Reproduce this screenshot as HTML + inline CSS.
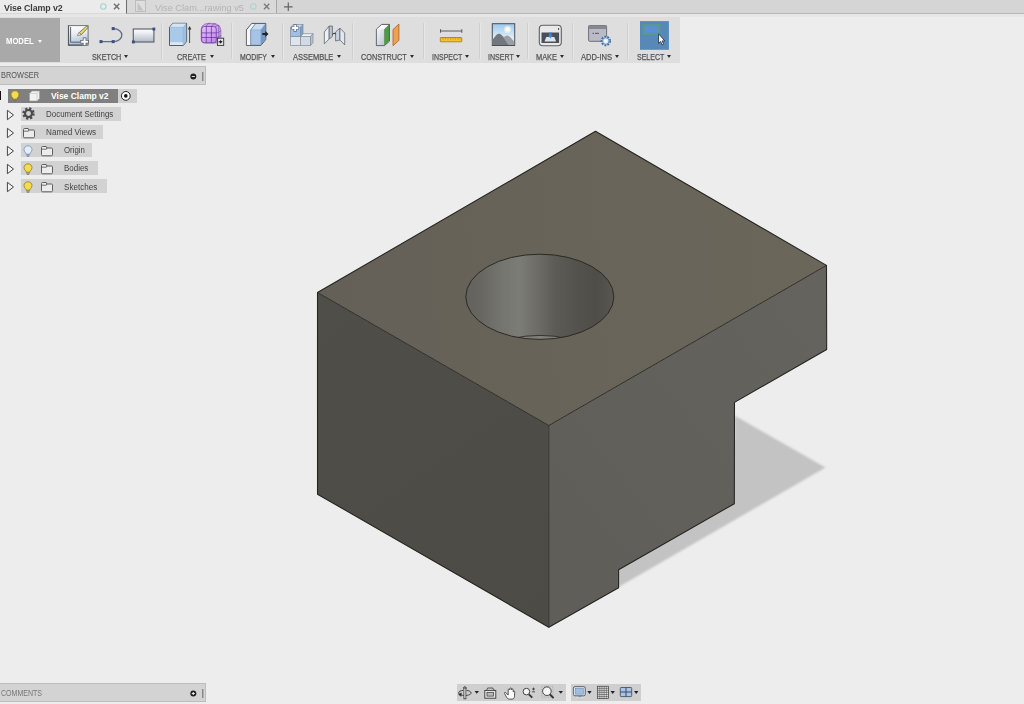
<!DOCTYPE html>
<html><head><meta charset="utf-8"><title>Vise Clamp v2</title>
<style>
*{box-sizing:border-box;margin:0;padding:0}
html,body{width:1024px;height:704px;overflow:hidden;background:#ededed;font-family:"Liberation Sans",sans-serif;}
#app{position:relative;width:1024px;height:704px;overflow:hidden;background:#ededed}
.abs{position:absolute}
#tabbar{left:0;top:0;width:1024px;height:14px;background:#d5d5d5;border-bottom:1px solid #b9b9b9}
#tab1{left:0;top:0;width:127px;height:14px;background:#ebebeb;border-right:1.200px solid #6e6e6e;border-bottom:1px solid #d8d8d8}
#tab2{left:128px;top:0;width:149px;height:13px;background:#d9d9d9;border-right:1px solid #a8a8a8}
.tabt{position:absolute;top:2px;font-size:9.5px;line-height:12px;white-space:nowrap;transform-origin:0 50%}
#toolbar{left:0;top:17px;width:680px;height:45.500px;background:#dedede}
#model{left:0;top:17.500px;width:60px;height:44.500px;background:#a9a9a9;color:#fff;font-weight:bold;font-size:9.300px;line-height:46px;padding-left:6px;white-space:nowrap}
.sep{position:absolute;top:23px;width:1px;height:36px;background:#cfcfcf;border-right:1px solid #e8e8e8;box-sizing:content-box}
.lbl{position:absolute;top:52px;height:10px;font-size:9px;line-height:10px;color:#555;-webkit-text-stroke:.250px #555;white-space:nowrap;transform-origin:0 50%}
.arw{position:absolute;top:54.800px;margin-left:.700px;width:0;height:0;border-left:2.5px solid transparent;border-right:2.5px solid transparent;border-top:3.5px solid #2e2e2e}
.lbl i{font-style:normal;font-size:6px;margin-left:2px;position:relative;top:-1px;color:#333;display:inline-block}
.bar{position:absolute;left:0;width:205.500px;height:19px;background:#d3d3d3;border:1px solid #bdbdbd;border-left:none;font-size:8px;line-height:16px;color:#555;padding-left:2px}
.row{position:absolute;height:14.400px;background:#d2d2d2}
.rt{position:absolute;font-size:8.500px;line-height:14.400px;color:#444;white-space:nowrap;transform-origin:0 50%}
</style></head><body>
<div id="app">
<svg class="abs" style="left:0;top:0" width="1024" height="704" viewBox="0 0 1024 704">
<defs>
<linearGradient id="gtop" gradientUnits="userSpaceOnUse" x1="330" y1="300" x2="820" y2="260"><stop offset="0" stop-color="#646058"/><stop offset="0.500" stop-color="#696459"/><stop offset="1" stop-color="#6b665a"/></linearGradient>
<linearGradient id="gleft" gradientUnits="userSpaceOnUse" x1="317" y1="300" x2="549" y2="620"><stop offset="0" stop-color="#504e49"/><stop offset="1" stop-color="#4c4b46"/></linearGradient>
<linearGradient id="gright" gradientUnits="userSpaceOnUse" x1="549" y1="520" x2="827" y2="300"><stop offset="0" stop-color="#5f5e59"/><stop offset="1" stop-color="#64635d"/></linearGradient>
<linearGradient id="ghole" gradientUnits="userSpaceOnUse" x1="466" y1="0" x2="614" y2="0">
<stop offset="0" stop-color="#63625c"/><stop offset="0.1" stop-color="#676660"/><stop offset="0.24" stop-color="#75756f"/><stop offset="0.36" stop-color="#7c7c76"/><stop offset="0.5" stop-color="#6b6a64"/><stop offset="0.6" stop-color="#5d5b55"/><stop offset="0.75" stop-color="#54524d"/><stop offset="0.88" stop-color="#4f4d48"/><stop offset="0.96" stop-color="#55534e"/><stop offset="1" stop-color="#5a5852"/></linearGradient>
<filter id="blur1" x="-5%" y="-5%" width="110%" height="110%"><feGaussianBlur stdDeviation="1.1"/></filter>
<clipPath id="holeclip"><ellipse cx="539.8" cy="296.8" rx="74" ry="42.6"/></clipPath>
</defs>
<!-- ground shadow -->
<polygon points="734.5,415.5 825.5,467.5 618.6,587 560,600 600,500 734.5,440" fill="#c3c3c3" filter="url(#blur1)"/>
<!-- faces -->
<polygon points="317.5,292.5 548.8,425.5 548.8,627.3 317.5,494.2" fill="url(#gleft)"/>
<polygon points="548.8,425.5 826.5,265.4 826.7,349.5 734.5,402.4 734.3,503.7 618.6,569.8 618.6,587.7 548.8,627.3" fill="url(#gright)"/>
<polygon points="317.5,292.5 595.5,131.3 826.5,265.4 548.8,425.5" fill="url(#gtop)"/>
<!-- hole -->
<ellipse cx="539.8" cy="296.8" rx="74" ry="42.6" fill="url(#ghole)"/>
<g clip-path="url(#holeclip)"><ellipse cx="539.800" cy="378" rx="74" ry="42.600" fill="#817f79" stroke="#2d2b26" stroke-width="0.900"/></g>
<ellipse cx="539.8" cy="296.8" rx="74" ry="42.6" fill="none" stroke="#2b2924" stroke-width="1"/>
<!-- edges -->
<g fill="none" stroke="#23221e" stroke-width="1.050" stroke-linejoin="round" stroke-linecap="round">
<polygon points="317.5,292.5 595.5,131.3 826.5,265.4 826.7,349.5 734.5,402.4 734.3,503.7 618.6,569.8 618.6,587.7 548.8,627.3 317.5,494.2"/>
<polyline points="317.5,292.5 548.8,425.5 826.5,265.4" stroke="#2a2823" stroke-width="0.95"/>
<line x1="548.8" y1="425.5" x2="548.8" y2="627.3" stroke="#33322d" stroke-width="1"/>
</g>
</svg>
<div id="tabbar" class="abs"></div>
<div id="tab1" class="abs"><span class="tabt" style="left:4px;color:#3c3c3c;font-weight:bold;transform:scaleX(.93);letter-spacing:-.1px">Vise Clamp v2</span>
<svg class="abs" style="left:96px;top:1px" width="28" height="12" viewBox="0 0 28 12"><circle cx="7.300" cy="5.500" r="2.700" fill="none" stroke="#a6d3cd" stroke-width="1.100"/><path d="M18 2.800l5.300 5.500M23.300 2.800l-5.300 5.500" stroke="#737373" stroke-width="1.500" fill="none"/></svg></div>
<div id="tab2" class="abs"><svg class="abs" style="left:6px;top:0" width="14" height="13" viewBox="0 0 14 13"><rect x="1.5" y="0.5" width="10" height="11" fill="#dedede" stroke="#bdbdbd"/><path d="M3.5 2.5v8h6z" fill="#c2c2c2"/></svg>
<span class="tabt" style="left:27px;color:#b4b4b4;transform:scaleX(.97)">Vise Clam...rawing v5</span>
<svg class="abs" style="left:118px;top:1px" width="28" height="12" viewBox="0 0 28 12"><circle cx="7.300" cy="5.500" r="2.700" fill="none" stroke="#a9d5cf" stroke-width="1.100"/><path d="M18 2.800l5.300 5.500M23.300 2.800l-5.300 5.500" stroke="#808080" stroke-width="1.500" fill="none"/></svg></div>
<svg class="abs" style="left:282px;top:1px" width="12" height="12" viewBox="0 0 12 12"><path d="M6.3 1.5v8.6M2 5.8h8.6" stroke="#666" stroke-width="1.2"/></svg>
<div class="abs" style="left:0;top:14px;width:1024px;height:3px;background:#e6e6e6"></div>
<div id="toolbar" class="abs"></div>
<div id="model" class="abs"><span style="display:inline-block;transform-origin:0 50%;transform:scaleX(.825)">MODEL</span><span class="abs" style="left:37.500px;top:22px;width:0;height:0;border-left:2.500px solid transparent;border-right:2.500px solid transparent;border-top:3px solid #fff"></span></div>
<svg class="abs" style="left:0;top:0" width="690" height="66" viewBox="0 0 690 66">
<defs>
<linearGradient id="gsk" x1="0.300" y1="0" x2="0.500" y2="1"><stop offset="0" stop-color="#ffffff"/><stop offset="0.400" stop-color="#e9edf3"/><stop offset="1" stop-color="#a4bcd6"/></linearGradient>
<linearGradient id="grc" x1="0" y1="0" x2="0" y2="1"><stop offset="0" stop-color="#ffffff"/><stop offset="0.300" stop-color="#eceef2"/><stop offset="1" stop-color="#b2b9c6"/></linearGradient>
<linearGradient id="gbx" x1="0" y1="0" x2="1" y2="0"><stop offset="0" stop-color="#a9c7e6"/><stop offset="1" stop-color="#86add6"/></linearGradient>
<linearGradient id="gpu" x1="0" y1="0" x2="0.600" y2="1"><stop offset="0" stop-color="#e6c2fa"/><stop offset="1" stop-color="#c48af0"/></linearGradient>
<linearGradient id="gsky" x1="0" y1="0" x2="0" y2="1"><stop offset="0" stop-color="#9cc8ee"/><stop offset="0.700" stop-color="#e4f0fa"/><stop offset="1" stop-color="#eef4fa"/></linearGradient>
<linearGradient id="ggr" x1="0" y1="0" x2="1" y2="1"><stop offset="0" stop-color="#f4f6f8"/><stop offset="1" stop-color="#b9c4d0"/></linearGradient>
</defs>
<!-- SKETCH: create sketch -->
<g>
<rect x="68.500" y="25.600" width="19.600" height="19.600" fill="url(#gsk)" stroke="#70757d" stroke-width="1"/>
<path d="M68.500 25.600v19.600h14" fill="none" stroke="#555a62" stroke-width="1.200"/>
<path d="M70.600 26.800v15.400h9.500" fill="none" stroke="#47525e" stroke-width="0.900"/>
<path d="M79.200 32.600l6.900-6.100c1-.7 2.300.6 1.500 1.600l-6.400 6.600z" fill="#e9da68" stroke="#5c5030" stroke-width="0.700" stroke-linejoin="round"/>
<path d="M79.200 32.600l-1.700 2.500c-.2.400 0 .600.400.500l3.300-.9z" fill="#fbf8ee" stroke="#5c5030" stroke-width="0.600" stroke-linejoin="round"/>
<path d="M84.600 37.400v8.600M80.300 41.700h8.600" stroke="#5b5f66" stroke-width="3.600"/>
<path d="M84.600 38.200v7M81.100 41.700h7" stroke="#fcfcfc" stroke-width="2"/>
</g>
<!-- SKETCH: line/arc -->
<g fill="none" stroke="#5f6c84" stroke-width="1.300">
<path d="M101 41.600h12.200c11.500 0 11.500-13 0-13"/>
</g>
<g fill="#3b4f80"><rect x="99.500" y="40.100" width="3" height="3"/><rect x="111.700" y="40.100" width="3" height="3"/><rect x="111.700" y="27.100" width="3" height="3"/></g>
<!-- SKETCH: rectangle -->
<rect x="133.300" y="29" width="20.600" height="13" fill="url(#grc)" stroke="#62666e" stroke-width="1.200"/>
<rect x="152.400" y="27.600" width="2.900" height="2.900" fill="#3b4f80"/><rect x="131.900" y="40.500" width="2.900" height="2.900" fill="#3b4f80"/>
<!-- CREATE: extrude -->
<g stroke-linejoin="round">
<path d="M169.500 27.300l3.300-4h13.800v18.200l-3.300 4h-13.800z" fill="#a9c9e9" stroke="#4a4f58" stroke-width="0.900"/>
<path d="M169.900 27.300l3.100-3.700h13.200l-3.100 3.700z" fill="#d3e4f5"/>
<path d="M183.300 27.400l2.900-3.500v17.400l-2.900 3.600z" fill="#9dbfe2"/>
<path d="M170 42.200h13.200v2.800h-13.200z" fill="#dce8f4"/>
<path d="M169.900 27.300h13.300v17.800M183.200 27.300l3-3.600" fill="none" stroke="#8aa9cc" stroke-width="0.500"/>
</g>
<path d="M189.600 43v-15" stroke="#3a3a3a" stroke-width="0.900"/><path d="M187.800 29.400l1.800-3.300 1.800 3.300z" fill="#333"/>
<!-- CREATE: form -->
<g>
<path d="M201.200 30.500c0-5 2.800-7.200 8.800-7.200c7.200 0 10.900 2 10.900 8v6.700c0 3.400-1.600 5-4.600 5h-11c-2.700 0-4.100-1.500-4.100-4z" fill="#cfa1ef" stroke="#8a5cb8" stroke-width="0.700"/>
<rect x="201.600" y="26.500" width="14.700" height="16.300" rx="2.600" fill="url(#gpu)" stroke="#5e3192" stroke-width="0.700"/>
<path d="M206.300 26.500v16.300M211.400 26.500v16.300M201.600 32.900h14.700M201.600 37.500h14.700" stroke="#5e3192" stroke-width="0.700" fill="none"/>
<path d="M206.300 26.500c.5-2 1.800-3 3.700-3.100M211.400 26.500c.7-1.800 2.300-2.700 4.600-2.600M215.200 27c1-1.500 2.700-2 4.300-1.200M216.300 32.900c1.800-.3 3.400-1 4.600-2M216.300 37.500c1.800-.3 3.400-1 4.600-2M218.800 26v16" stroke="#6b3ea0" stroke-width="0.600" fill="none"/>
<rect x="217.400" y="38.200" width="6.300" height="7.200" fill="#e4e4e4" stroke="#333" stroke-width="0.900"/>
<path d="M220 39.900l2.600 1.900-2.600 1.900z" fill="#1a1a1a"/><path d="M218.600 41.800h1.800" stroke="#1a1a1a" stroke-width="1.200"/>
</g>
<!-- MODIFY: press pull -->
<g stroke-linejoin="round">
<path d="M246.400 29.800l5.400-6.400h14v16.100l-4.900 5.900h-14.500z" fill="#a6c5e6" stroke="#474b53" stroke-width="0.900"/>
<path d="M246.900 29.900l5.100-6h3.300l-4.600 6v15h-3.800z" fill="#f6f8fb"/>
<path d="M250.700 29.900l4.600-6h10l-4.400 6z" fill="#c9dcf0"/>
<path d="M260.900 29.900l4.400-5.800v15.200l-4.400 5.500z" fill="#7399c6"/>
<path d="M250.700 45v-15.100l4.600-6" fill="none" stroke="#5f6f86" stroke-width="0.700"/>
<path d="M250.700 29.900h10.200v15M260.900 29.900l4.400-5.800" fill="none" stroke="#7f9cbf" stroke-width="0.500"/>
</g>
<path d="M262.300 32.900h3v-2l3.200 3-3.200 3v-2h-3z" fill="#222"/>
<!-- ASSEMBLE: new component -->
<g stroke="#7f8c9a" stroke-width="0.7" stroke-linejoin="round">
<path d="M290.500 36.500h10v9h-10z" fill="#dfe5ec"/><path d="M300.500 36.500h10v9h-10z" fill="#d2dae3"/>
<path d="M300.500 36.500l2.500-2.800h10l-2.500 2.800z" fill="#eef2f6"/><path d="M310.500 36.500l2.500-2.800v9l-2.500 2.800z" fill="#b7c2ce"/>
<path d="M290.500 27.500h10v9h-10z" fill="#9fbfe3"/><path d="M290.500 27.500l2.500-3h10l-2.500 3z" fill="#c5daf0"/><path d="M300.500 27.500l2.500-3v9.200l-2.500 2.800z" fill="#7ea4cf"/>
</g>
<path d="M295.200 24.300v7.400M291.500 28h7.400" stroke="#5f6f82" stroke-width="3.200"/><path d="M295.200 24.900v6.200M292.100 28h6.200" stroke="#fff" stroke-width="1.800"/>
<!-- ASSEMBLE: joint -->
<g stroke="#5d6570" stroke-width="0.800" stroke-linejoin="round">
<path d="M324.300 32l4.900-6v13l-4.900 4.800z" fill="#eef1f4"/><path d="M329.200 26h3.200v10.500l-3.200 2.500z" fill="#bcc4ce"/>
<path d="M335.600 32l4.300-3.800v11.800l-4.300 1z" fill="#c9d3df"/><path d="M339.900 28.200l4.800 4.800v11.900l-4.800-4.900z" fill="#e3e8ee"/>
<path d="M332.400 34.500c1.200-1.600 2.300-1.600 3.200-.3" fill="none" stroke="#3a3a3a" stroke-width="1.100"/>
</g>
<!-- CONSTRUCT -->
<g stroke-linejoin="round">
<path d="M376.400 29.200l5.200-4.800h7.900v16.700l-5 4.500h-8.100z" fill="#eceff3" stroke="#474b52" stroke-width="0.900"/>
<path d="M376.900 29.300l4.900-4.400h7l-4.600 4.400z" fill="#f8f9fa"/>
<path d="M376.900 29.400h7.500v15.700h-7.500z" fill="url(#ggr)"/>
<path d="M384.500 29.200l4.700-4.400v16l-4.700 4.200z" fill="#4f9a45" stroke="#3a7a33" stroke-width="0.500"/>
<path d="M393 29.600l5.900-5.500v16.300l-5.900 5.400z" fill="#f0a052" stroke="#a8602a" stroke-width="0.800"/>
</g>
<!-- INSPECT -->
<path d="M440.500 31h21.300M440.500 29.200v3.600M461.800 29.200v3.600" stroke="#3c3c3c" stroke-width="0.800" fill="none"/>
<rect x="440.300" y="37.500" width="21.500" height="4.300" rx="0.600" fill="#f1c232" stroke="#9c7a1c" stroke-width="0.800"/>
<path d="M443 37.700v1.800M445.500 37.700v1.800M448 37.700v1.800M450.500 37.700v1.800M453 37.700v1.800M455.500 37.700v1.800M458 37.700v1.800M460 37.700v1.800" stroke="#a87d14" stroke-width="0.500"/>
<!-- INSERT -->
<rect x="492.300" y="23.700" width="22.400" height="21.800" fill="url(#gsky)" stroke="#4a4f56" stroke-width="1"/>
<circle cx="507.600" cy="29.400" r="3.600" fill="#fdf9e2" opacity="0.550"/><circle cx="507.600" cy="29.400" r="2.200" fill="#fffbe6"/>
<path d="M492.800 45v-5.500c2-2 4-5.700 6.200-5.700 1.800 0 3.600 2.200 5 3.300 1-.8 2-1.700 3.200-1.700 1.800 0 4.700 4 7 6.200v3.400z" fill="#9a9fa6"/>
<path d="M492.800 45v-5.500c2-2 4-5.700 6.200-5.700 2.800 0 6 7 9.500 11.200z" fill="#73777d"/>
<!-- MAKE -->
<rect x="539.300" y="25.300" width="22" height="20.400" rx="3.500" fill="#e9e9e9" stroke="#606060" stroke-width="1.100"/>
<path d="M541.500 32.500h17.600v10.500h-17.600z" fill="#4b5058"/>
<path d="M544.500 41.500l1.800-4.500h8l1.800 4.500z" fill="#dfe5ea"/>
<path d="M549.300 32.500h2.200v3h1.500l-2.600 2.800-2.600-2.800h1.500z" fill="#3d86d6"/>
<path d="M558.600 30v-2" stroke="#444" stroke-width="1"/>
<!-- ADD-INS -->
<rect x="588.600" y="25.500" width="18" height="15.800" rx="1" fill="#b9bbc7" stroke="#6d7078" stroke-width="1"/>
<rect x="588.600" y="25.500" width="18" height="3.500" fill="#85888f"/>
<path d="M592.500 33.300h1.500M595 33.300h4" stroke="#555" stroke-width="1"/>
<circle cx="605.800" cy="41" r="4.400" fill="#e9f0f8" stroke="#3f6fa8" stroke-width="1.600" stroke-dasharray="2 1.100"/>
<circle cx="605.800" cy="41" r="3.300" fill="#dbe7f4" stroke="#3f6fa8" stroke-width="0.800"/>
<circle cx="605.800" cy="41" r="1.500" fill="#fff"/>
<!-- SELECT -->
<rect x="640" y="21.100" width="28.900" height="28.700" fill="#5788b8"/>
<rect x="643.600" y="24.800" width="15.800" height="9.200" fill="#5b8fd0" stroke="#5b9a86" stroke-width="2.200" stroke-opacity="0.900"/>
<path d="M658.600 33.800v9.600l2-1.900 1.500 3.400 1.500-.7-1.500-3.300h2.700z" fill="#fff" stroke="#1f2a38" stroke-width="0.800" stroke-linejoin="round"/>
</svg>
<div class="sep" style="left:161px"></div><div class="sep" style="left:231px"></div><div class="sep" style="left:282px"></div><div class="sep" style="left:352px"></div><div class="sep" style="left:423px"></div><div class="sep" style="left:479px"></div><div class="sep" style="left:527px"></div><div class="sep" style="left:572px"></div><div class="sep" style="left:627px"></div>
<span class="lbl" style="left:91.7px;transform:scaleX(0.803)">SKETCH</span><span class="arw" style="left:123.5px"></span>
<span class="lbl" style="left:177.0px;transform:scaleX(0.803)">CREATE</span><span class="arw" style="left:209.0px"></span>
<span class="lbl" style="left:240.0px;transform:scaleX(0.771)">MODIFY</span><span class="arw" style="left:270.5px"></span>
<span class="lbl" style="left:293.2px;transform:scaleX(0.830)">ASSEMBLE</span><span class="arw" style="left:336.1px"></span>
<span class="lbl" style="left:360.9px;transform:scaleX(0.811)">CONSTRUCT</span><span class="arw" style="left:409.3px"></span>
<span class="lbl" style="left:431.7px;transform:scaleX(0.777)">INSPECT</span><span class="arw" style="left:464.5px"></span>
<span class="lbl" style="left:488.0px;transform:scaleX(0.784)">INSERT</span><span class="arw" style="left:515.5px"></span>
<span class="lbl" style="left:536.0px;transform:scaleX(0.823)">MAKE</span><span class="arw" style="left:559.5px"></span>
<span class="lbl" style="left:580.9px;transform:scaleX(0.840)">ADD-INS</span><span class="arw" style="left:613.9px"></span>
<span class="lbl" style="left:636.7px;transform:scaleX(0.780)">SELECT</span><span class="arw" style="left:666.5px"></span>


<div class="bar" style="top:66px"><span class="rt" style="left:1px;top:0;font-size:8.800px;line-height:16px;color:#555;transform:scaleX(0.836)">BROWSER</span>
<svg class="abs" style="left:188px;top:3.500px" width="16" height="11" viewBox="0 0 16 11"><circle cx="5.300" cy="5.500" r="3" fill="#222"/><path d="M3.800 5.500h3" stroke="#ddd" stroke-width="1"/><path d="M14.800 1v9" stroke="#666" stroke-width="1"/></svg></div>
<div class="abs" style="left:0;top:91.400px;width:1.200px;height:8.300px;background:#111"></div>
<div class="row" style="left:7.500px;top:88.700px;width:129px;background:#d0d0d0"></div>
<div class="row" style="left:7.500px;top:88.700px;width:110.300px;background:#808080"></div>
<svg class="abs" style="left:9.800px;top:90.300px" width="10" height="12" viewBox="0 0 10 12"><path d="M5 .8c-2.400 0-4 1.700-4 3.800 0 1.400.7 2.200 1.400 3 .5.500.7 1 .7 1.600h3.800c0-.6.200-1.100.7-1.600.7-.8 1.400-1.600 1.400-3 0-2.100-1.600-3.800-4-3.800z" fill="#f5dc4f" stroke="#8c7a1e" stroke-width="0.800"/><path d="M3.300 10.100h3.400M3.800 11.300h2.400" stroke="#77746a" stroke-width="0.900"/></svg>
<svg class="abs" style="left:28px;top:89px" width="13" height="14" viewBox="0 0 13 14"><path d="M1.500 4.500l2.500-2.500h7.500v7.500l-2.500 2.500h-7.500z" fill="#f2f2f2" stroke="#9a9a9a" stroke-width="0.600"/><path d="M1.500 4.500h7.500v7.500M9 4.500l2.500-2.500" fill="none" stroke="#c4c4c4" stroke-width="0.700"/></svg>
<span class="rt" style="left:51px;top:89px;color:#fff;font-weight:bold;font-size:8.500px;transform:scaleX(1.000)">Vise Clamp v2</span>
<svg class="abs" style="left:120px;top:90px" width="12" height="12" viewBox="0 0 12 12"><circle cx="5.800" cy="5.900" r="4.400" fill="#fafafa" stroke="#222" stroke-width="1"/><circle cx="5.800" cy="5.900" r="1.800" fill="#111"/></svg>
<div class="row" style="left:20.500px;top:106.7px;width:100.5px"></div>
<svg class="abs" style="left:6px;top:109.0px" width="9" height="12" viewBox="0 0 9 12"><path d="M1.400 1.300v9.400l6.100-4.700z" fill="#f4f4f4" stroke="#444" stroke-width="1" stroke-linejoin="round"/></svg>
<svg class="abs" style="left:22.200px;top:107.4px" width="13" height="13" viewBox="0 0 13 13"><circle cx="6.500" cy="6.500" r="4.900" fill="none" stroke="#4a4a4a" stroke-width="2.600" stroke-dasharray="2.150 1.700"/><circle cx="6.500" cy="6.500" r="3.500" fill="none" stroke="#4a4a4a" stroke-width="2.100"/></svg>
<span class="rt" style="left:45.5px;top:107.1px;transform:scaleX(0.937)">Document Settings</span>
<div class="row" style="left:20.500px;top:124.8px;width:82.5px"></div>
<svg class="abs" style="left:6px;top:127.1px" width="9" height="12" viewBox="0 0 9 12"><path d="M1.400 1.300v9.400l6.100-4.700z" fill="#f4f4f4" stroke="#444" stroke-width="1" stroke-linejoin="round"/></svg>
<svg class="abs" style="left:21.5px;top:126.8px" width="14" height="12" viewBox="0 0 14 12"><path d="M1.500 2.600c0-.7.400-1.100 1.100-1.100h3.600l.7 1.500h4.500c.7 0 1.100.4 1.100 1.100v5.600c0 .7-.4 1.100-1.100 1.100h-8.800c-.7 0-1.100-.4-1.100-1.100z" fill="#ececec" stroke="#505050" stroke-width="0.900"/><path d="M1.500 4.200h4.900l.5-1.200" fill="none" stroke="#505050" stroke-width="0.800"/></svg>
<span class="rt" style="left:45.5px;top:125.2px;transform:scaleX(0.958)">Named Views</span>
<div class="row" style="left:20.500px;top:142.9px;width:71.5px"></div>
<svg class="abs" style="left:6px;top:145.2px" width="9" height="12" viewBox="0 0 9 12"><path d="M1.400 1.300v9.400l6.100-4.700z" fill="#f4f4f4" stroke="#444" stroke-width="1" stroke-linejoin="round"/></svg>
<svg class="abs" style="left:23.200px;top:144.6px" width="10" height="12" viewBox="0 0 10 12"><path d="M5 .8c-2.400 0-4 1.700-4 3.800 0 1.400.7 2.200 1.400 3 .5.500.7 1 .7 1.600h3.800c0-.6.200-1.100.7-1.600.7-.8 1.400-1.600 1.400-3 0-2.100-1.600-3.800-4-3.800z" fill="#e4edfa" stroke="#6d8fc0" stroke-width="0.800"/><path d="M3.300 10.100h3.400M3.800 11.300h2.400" stroke="#6d7fa8" stroke-width="0.900"/></svg>
<svg class="abs" style="left:40.0px;top:144.9px" width="14" height="12" viewBox="0 0 14 12"><path d="M1.500 2.600c0-.7.400-1.100 1.100-1.100h3.600l.7 1.500h4.500c.7 0 1.100.4 1.100 1.100v5.600c0 .7-.4 1.100-1.100 1.100h-8.800c-.7 0-1.100-.4-1.100-1.100z" fill="#ececec" stroke="#505050" stroke-width="0.900"/><path d="M1.500 4.200h4.900l.5-1.200" fill="none" stroke="#505050" stroke-width="0.800"/></svg>
<span class="rt" style="left:64.4px;top:143.3px;transform:scaleX(0.921)">Origin</span>
<div class="row" style="left:20.500px;top:161.0px;width:77.2px"></div>
<svg class="abs" style="left:6px;top:163.3px" width="9" height="12" viewBox="0 0 9 12"><path d="M1.400 1.300v9.400l6.100-4.700z" fill="#f4f4f4" stroke="#444" stroke-width="1" stroke-linejoin="round"/></svg>
<svg class="abs" style="left:23.200px;top:162.7px" width="10" height="12" viewBox="0 0 10 12"><path d="M5 .8c-2.400 0-4 1.700-4 3.800 0 1.400.7 2.200 1.400 3 .5.500.7 1 .7 1.600h3.800c0-.6.200-1.100.7-1.600.7-.8 1.400-1.600 1.400-3 0-2.100-1.600-3.800-4-3.800z" fill="#f5dc4f" stroke="#8c7a1e" stroke-width="0.800"/><path d="M3.300 10.100h3.400M3.800 11.300h2.400" stroke="#77746a" stroke-width="0.900"/></svg>
<svg class="abs" style="left:40.0px;top:163.0px" width="14" height="12" viewBox="0 0 14 12"><path d="M1.500 2.600c0-.7.400-1.100 1.100-1.100h3.600l.7 1.500h4.500c.7 0 1.100.4 1.100 1.100v5.600c0 .7-.4 1.100-1.100 1.100h-8.800c-.7 0-1.100-.4-1.100-1.100z" fill="#ececec" stroke="#505050" stroke-width="0.900"/><path d="M1.500 4.200h4.900l.5-1.200" fill="none" stroke="#505050" stroke-width="0.800"/></svg>
<span class="rt" style="left:64.4px;top:161.4px;transform:scaleX(0.935)">Bodies</span>
<div class="row" style="left:20.500px;top:179.1px;width:86.3px"></div>
<svg class="abs" style="left:6px;top:181.4px" width="9" height="12" viewBox="0 0 9 12"><path d="M1.400 1.300v9.400l6.100-4.700z" fill="#f4f4f4" stroke="#444" stroke-width="1" stroke-linejoin="round"/></svg>
<svg class="abs" style="left:23.200px;top:180.8px" width="10" height="12" viewBox="0 0 10 12"><path d="M5 .8c-2.400 0-4 1.700-4 3.800 0 1.400.7 2.200 1.400 3 .5.500.7 1 .7 1.600h3.800c0-.6.200-1.100.7-1.600.7-.8 1.400-1.600 1.400-3 0-2.100-1.600-3.800-4-3.800z" fill="#f5dc4f" stroke="#8c7a1e" stroke-width="0.800"/><path d="M3.300 10.100h3.400M3.800 11.300h2.400" stroke="#77746a" stroke-width="0.900"/></svg>
<svg class="abs" style="left:40.0px;top:181.1px" width="14" height="12" viewBox="0 0 14 12"><path d="M1.500 2.600c0-.7.400-1.100 1.100-1.100h3.600l.7 1.500h4.500c.7 0 1.100.4 1.100 1.100v5.600c0 .7-.4 1.100-1.100 1.100h-8.800c-.7 0-1.100-.4-1.100-1.100z" fill="#ececec" stroke="#505050" stroke-width="0.900"/><path d="M1.500 4.200h4.900l.5-1.200" fill="none" stroke="#505050" stroke-width="0.800"/></svg>
<span class="rt" style="left:64.4px;top:179.5px;transform:scaleX(0.952)">Sketches</span>
<div class="bar" style="top:683px"><span class="rt" style="left:1px;top:.500px;font-size:8.500px;line-height:16px;color:#777;transform:scaleX(0.827)">COMMENTS</span>
<svg class="abs" style="left:188px;top:3.500px" width="16" height="11" viewBox="0 0 16 11"><circle cx="5.300" cy="5.500" r="3" fill="#222"/><path d="M3.800 5.500h3M5.300 4v3" stroke="#eee" stroke-width="1"/><path d="M14.800 1v9" stroke="#666" stroke-width="1"/></svg></div>
<div class="abs" style="left:456.700px;top:683.900px;width:109px;height:17.600px;background:#cfcfcf"></div>
<div class="abs" style="left:570.800px;top:683.900px;width:70.200px;height:17.600px;background:#cfcfcf"></div>
<svg class="abs" style="left:450px;top:680px" width="200" height="24" viewBox="450 680 200 24">
<!-- orbit -->
<g fill="none" stroke="#333" stroke-width="0.900">
<path d="M463.400 690.300c-3 .3-4.700 1.300-4.700 2.600 0 1.500 2.800 2.600 6.200 2.600s6.200-1.100 6.200-2.600c0-1.200-1.800-2.200-4.500-2.500"/>
<path d="M461.300 693l-2.700 1.500 2.500 1.800z" fill="#333" stroke-width="0.600"/>
<rect x="463.900" y="688" width="2" height="10.800" fill="#f4f4f4" stroke-width="0.800"/>
<path d="M463 688.300l1.900-1.800 1.900 1.800" stroke-width="0.900"/>
</g>
<path d="M474.6 690.9h4.400l-2.200 2.900z" fill="#222"/>
<!-- look at -->
<g fill="none" stroke="#3a3a3a" stroke-width="0.900"><rect x="484.800" y="690.400" width="11" height="7.800" fill="#e6e6e6"/><rect x="487" y="692.500" width="6.600" height="3.600" fill="#b9b9b9" stroke-width="0.700"/><path d="M486.300 690.400l1.600-2.400M494.300 690.400l-1.600-2.400M487.600 688h5.400" stroke-width="0.800"/></g>
<!-- pan hand -->
<path d="M506.300 693.400c-1-1.500-2.300-1.200-1.700.200l2.300 4.100c.6 1 1.500 1.400 2.800 1.400h2.300c1.500 0 2.300-.9 2.400-2.200l.4-5c0-1.200-1.500-1.200-1.600 0v-2.100c0-1.200-1.600-1.200-1.600 0v-1c0-1.200-1.700-1.200-1.700 0v1c0-1.200-1.700-1.200-1.700 0v5.200z" fill="#fafafa" stroke="#333" stroke-width="0.800" stroke-linejoin="round"/>
<!-- zoom -->
<g fill="none" stroke="#333"><circle cx="526.400" cy="691.600" r="3.300" fill="#f4f4f4" stroke-width="0.900"/><path d="M528.900 694.300l3.400 3.400" stroke-width="1.800"/><path d="M532 689h3M533.500 687.600v2.800M532 691.800h3" stroke-width="0.800"/></g>
<!-- zoom window -->
<g fill="none" stroke="#333"><rect x="541.800" y="686.200" width="11" height="11" stroke="#8a8a8a" stroke-width="0.500" stroke-dasharray="1 1"/><circle cx="546.900" cy="691.200" r="4.300" fill="#f6f6f6" stroke-width="0.900"/><path d="M550 694.500l3.600 3.600" stroke-width="1.900"/></g>
<path d="M558.6 690.9h4.400l-2.200 2.900z" fill="#222"/>
<!-- display -->
<g><rect x="573.400" y="686.600" width="11.900" height="9.200" rx="1.500" fill="#dcdfe4" stroke="#4f5968" stroke-width="0.900"/><rect x="575.400" y="688.300" width="7.900" height="5.800" fill="#9fbde4" stroke="#6a84a8" stroke-width="0.500"/><path d="M578.300 696h3.200v1.600h-3.200z" fill="#8a8f98"/><path d="M576.600 698.100h6.300" stroke="#fafafa" stroke-width="1.100"/><path d="M576.600 698.800h6.300" stroke="#9a9a9a" stroke-width="0.400"/></g>
<path d="M587.3 691.1h4.400l-2.200 2.900z" fill="#222"/>
<!-- grid -->
<g fill="none" stroke="#4a4a4a" stroke-width="0.550"><rect x="597.500" y="686.300" width="11" height="12.300" fill="#ededed" stroke-width="0.800"/><path d="M599.300 686.300v12.300M601.100 686.300v12.300M603 686.300v12.300M604.800 686.300v12.300M606.600 686.300v12.300M597.500 688.400h11M597.500 690.400h11M597.500 692.400h11M597.500 694.500h11M597.500 696.500h11"/></g>
<path d="M610.5 691.1h4.400l-2.200 2.900z" fill="#222"/>
<!-- viewports -->
<g stroke="#44546a" stroke-width="0.900"><rect x="620.300" y="687.500" width="11.400" height="9.100" rx="0.800" fill="#a9c4e6"/><path d="M626 687.500v9.100M620.300 692h11.400" stroke="#3b4b62" stroke-width="1"/></g>
<path d="M634.0 691.1h4.400l-2.200 2.900z" fill="#222"/>
</svg>

</div>
</body></html>
